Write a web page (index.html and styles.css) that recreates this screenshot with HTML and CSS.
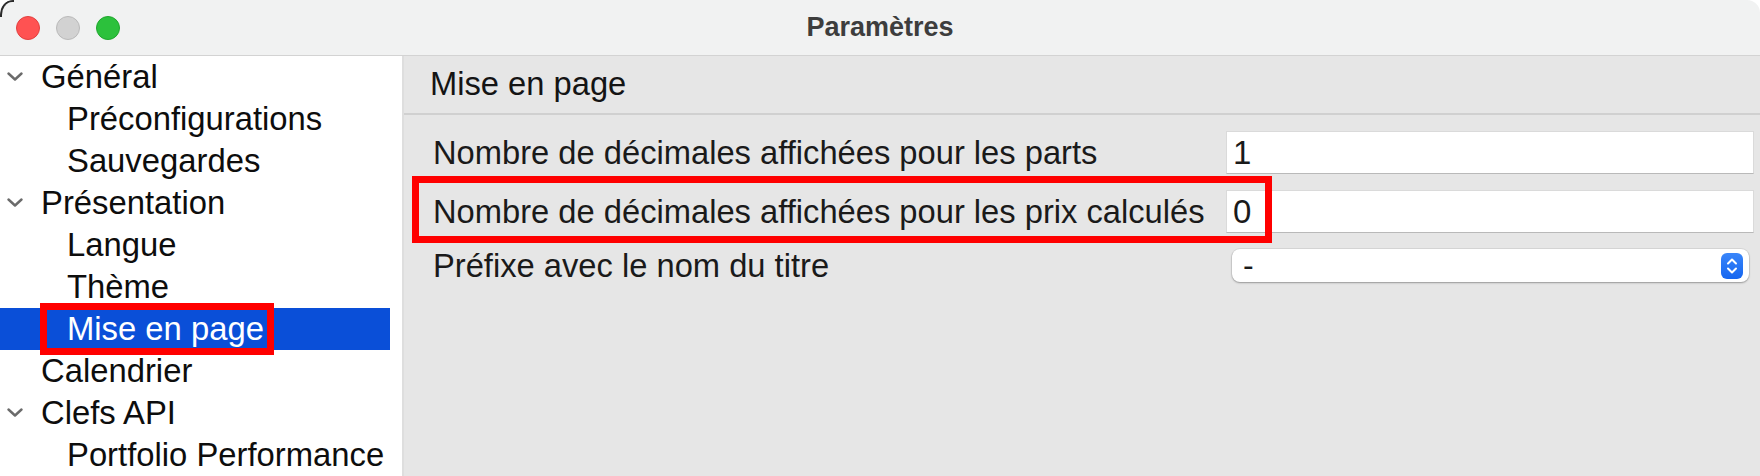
FILE: index.html
```html
<!DOCTYPE html>
<html>
<head>
    <title>Paramètres</title>
    <link rel="stylesheet" href="styles.css">
</head>
<body>
    <div class="window">
        <div class="titlebar">
            <div class="lights">
                <span class="light close"></span>
                <span class="light minimize"></span>
                <span class="light zoom"></span>
            </div>
            <div class="title">Paramètres</div>
            <div></div>
        </div>
        <div class="content">
            <div class="sidebar">
                <ul class="tree">
                    <li class="node"><svg class="chevron" width="16" height="9" viewBox="0 0 16 9"><polyline points="1.5,1.5 8,7.5 14.5,1.5"/></svg>Général</li>
                    <li class="leaf">Préconfigurations</li>
                    <li class="leaf">Sauvegardes</li>
                    <li class="node"><svg class="chevron" width="16" height="9" viewBox="0 0 16 9"><polyline points="1.5,1.5 8,7.5 14.5,1.5"/></svg>Présentation</li>
                    <li class="leaf">Langue</li>
                    <li class="leaf">Thème</li>
                    <li class="leaf selected"><span class="mark"></span>Mise en page</li>
                    <li class="node plain">Calendrier</li>
                    <li class="node"><svg class="chevron" width="16" height="9" viewBox="0 0 16 9"><polyline points="1.5,1.5 8,7.5 14.5,1.5"/></svg>Clefs API</li>
                    <li class="leaf">Portfolio Performance</li>
                </ul>
            </div>
            <div class="page">
                <div class="page-title">Mise en page</div>
                <div class="form">
                    <div class="row">
                        <label class="label">Nombre de décimales affichées pour les parts</label>
                        <input class="field" type="text" value="1">
                    </div>
                    <div class="row">
                        <span class="mark wide"></span>
                        <label class="label">Nombre de décimales affichées pour les prix calculés</label>
                        <input class="field" type="text" value="0">
                    </div>
                    <div class="row short">
                        <label class="label">Préfixe avec le nom du titre</label>
                        <div class="popup">
                            <span class="popup-value">-</span>
                            <span class="stepper">
                                <svg width="22" height="26" viewBox="0 0 22 26"><polyline points="7,10.5 11,6.5 15,10.5"/><polyline points="7,15.5 11,19.5 15,15.5"/></svg>
                            </span>
                        </div>
                    </div>
                </div>
            </div>
        </div>
    </div>
</body>
</html>
```

FILE: styles.css
```css
body {
    margin: 0;
    background: #fff;
    font-family: "Liberation Sans", Arial, sans-serif;
    overflow: hidden;
}

.window {
    position: relative;
    width: 1760px;
    height: 476px;
    display: flex;
    flex-direction: column;
    border-radius: 13px 13px 0 0;
    overflow: hidden;
}

.window::before {
    content: "";
    position: absolute;
    left: 0;
    top: 0;
    width: 12px;
    height: 15px;
    border-top: 2px solid #2a2a2a;
    border-left: 2px solid #2a2a2a;
    border-top-left-radius: 12px 15px;
    z-index: 2;
}

.titlebar {
    height: 55px;
    flex: none;
    display: grid;
    grid-template-columns: 1fr auto 1fr;
    align-items: center;
    background: #f1f2f2;
    border-bottom: 1px solid #d3d3d3;
}

.lights {
    display: flex;
    gap: 16px;
    padding-left: 16px;
}

.light {
    width: 22px;
    height: 22px;
    border-radius: 50%;
    border: 1px solid;
}

.close {
    background: #ff5252;
    border-color: #e2403f;
}

.minimize {
    background: #d2d2d2;
    border-color: #bababa;
}

.zoom {
    background: #2cc13c;
    border-color: #1fa72d;
}

.title {
    font-size: 27px;
    font-weight: bold;
    color: #3d3d3d;
}

.content {
    flex: 1;
    display: flex;
}

.sidebar {
    width: 402px;
    padding-right: 12px;
    box-sizing: border-box;
    background: #fff;
}

.tree {
    list-style: none;
    margin: 0;
    padding: 0;
}

.tree li {
    position: relative;
    height: 42px;
    line-height: 42px;
    font-size: 32.8px;
    color: #0d0d0d;
    white-space: nowrap;
}

.tree .node {
    display: flex;
    align-items: center;
    padding-left: 7px;
}

.tree .node.plain {
    padding-left: 41px;
}

.tree .leaf {
    padding-left: 67px;
}

.chevron {
    margin-right: 18px;
    margin-top: -2px;
}

.chevron polyline {
    fill: none;
    stroke: #6b6b6b;
    stroke-width: 2.4;
    stroke-linecap: round;
    stroke-linejoin: round;
}

.tree .selected {
    background: #0a4fd8;
    color: #fff;
}

.mark {
    position: absolute;
    left: 40px;
    top: -5px;
    width: 234px;
    height: 52px;
    box-sizing: border-box;
    border: 7px solid #ff0000;
    z-index: 1;
}

.page {
    flex: 1;
    background: #e6e6e6;
    border-left: 2px solid #dedede;
}

.page-title {
    height: 57px;
    line-height: 55px;
    padding-left: 26px;
    font-size: 32.7px;
    color: #141414;
    border-bottom: 2px solid #d0d0d0;
}

.form {
    display: flex;
    flex-direction: column;
    gap: 16px;
    padding: 16px 6px 0 29px;
}

.row {
    position: relative;
    display: flex;
    align-items: center;
    height: 43px;
}

.row.short {
    height: 33px;
}

.label {
    width: 793px;
    flex: none;
    font-size: 32.7px;
    color: #1a1a1a;
}

.field {
    flex: 1;
    height: 43px;
    box-sizing: border-box;
    margin: 0;
    padding: 0 6px;
    border: 1px solid #dadada;
    border-bottom-color: #b9b9b9;
    background: #fff;
    font-family: "Liberation Sans", Arial, sans-serif;
    font-size: 33px;
    color: #1a1a1a;
    outline: none;
}

.mark.wide {
    left: -21px;
    top: -14px;
    width: 860px;
    height: 67px;
}

.popup {
    flex: 1;
    height: 33px;
    margin: 0 5px 0 6px;
    display: flex;
    align-items: center;
    justify-content: space-between;
    padding: 0 6px 0 11px;
    background: #fff;
    border-radius: 8px;
    box-shadow: 0 0 0 1px rgba(0, 0, 0, 0.06), 0 1px 2px rgba(0, 0, 0, 0.3);
}

.popup-value {
    font-size: 32px;
    line-height: 33px;
    color: #1a1a1a;
}

.stepper {
    width: 22px;
    height: 26px;
    border-radius: 6px;
    background: linear-gradient(#3a86fa, #1566f0);
}

.stepper svg {
    display: block;
}

.stepper polyline {
    fill: none;
    stroke: #fff;
    stroke-width: 2;
    stroke-linecap: round;
    stroke-linejoin: round;
}
```
